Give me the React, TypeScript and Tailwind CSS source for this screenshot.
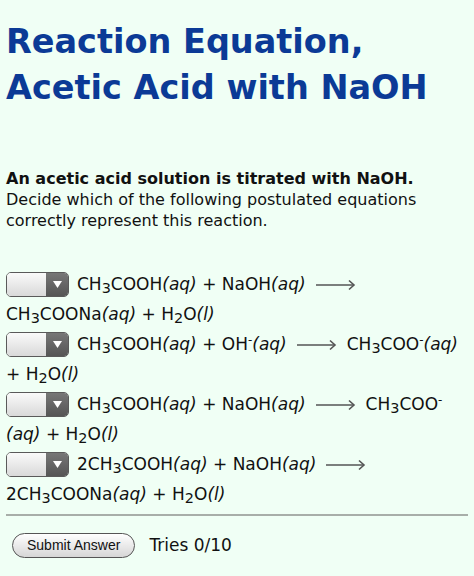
import type { ReactNode } from "react";

function Sub({ children }: { children: ReactNode }) {
  return <span className="relative top-[3px] text-[0.85em] leading-none">{children}</span>;
}

function Sup({ children }: { children: ReactNode }) {
  return <span className="relative -top-[6px] text-[0.7em] leading-none">{children}</span>;
}

function Arrow() {
  return (
    <svg width="44" height="14" viewBox="0 0 44 14" className="mx-[8px] inline-block align-middle">
      <path d="M2 7h38" stroke="#555" strokeWidth="1.6" />
      <path d="M35 2.5 40 7l-5 4.5" stroke="#555" strokeWidth="1.6" fill="none" />
    </svg>
  );
}

function Select() {
  return (
    <span className="mr-[8px] inline-flex h-[25px] w-[63px] shrink-0 overflow-hidden rounded-[5px] border border-[#5a5a5a]">
      <span className="flex-1 bg-gradient-to-b from-[#fafafa] to-[#d9d9d9]" />
      <span className="flex w-[22px] items-center justify-center bg-gradient-to-b from-[#777] to-[#555]">
        <svg width="9" height="7" viewBox="0 0 9 7">
          <path d="M0 0h9L4.5 7z" fill="#fff" />
        </svg>
      </span>
    </span>
  );
}

const ch3 = (
  <>
    CH<Sub>3</Sub>
  </>
);

function Aq() {
  return <i>(aq)</i>;
}

function Water() {
  return (
    <>
      H<Sub>2</Sub>O<i>(l)</i>
    </>
  );
}

function Row({ first, second }: { first: ReactNode; second: ReactNode }) {
  return (
    <div>
      <div className="flex h-[30px] items-center whitespace-nowrap">
        <Select />
        <span>{first}</span>
      </div>
      <div className="flex h-[30px] items-center whitespace-nowrap">
        <span>{second}</span>
      </div>
    </div>
  );
}

export default function App() {
  return (
    <div className="min-h-[576px] bg-[#f0fff5] px-[6px] pt-[19px] font-['DejaVu_Sans',Verdana,sans-serif] text-[#111]">
      <h1 className="text-[33.5px] font-bold leading-[46px] text-[#0b3a96]">
        Reaction Equation,
        <br />
        Acetic Acid with NaOH
      </h1>

      <div className="mt-[57px] text-[16px] leading-[21px]">
        <p className="font-bold">An acetic acid solution is titrated with NaOH.</p>
        <p>
          Decide which of the following postulated equations
          <br />
          correctly represent this reaction.
        </p>
      </div>

      <div className="mt-[38px] text-[17px] leading-[20px]">
        <Row
          first={
            <>
              {ch3}COOH<Aq /> + NaOH<Aq />
              <Arrow />
            </>
          }
          second={
            <>
              {ch3}COONa<Aq /> + <Water />
            </>
          }
        />
        <Row
          first={
            <>
              {ch3}COOH<Aq /> + OH<Sup>-</Sup>
              <Aq />
              <Arrow />
              {ch3}COO<Sup>-</Sup>
              <Aq />
            </>
          }
          second={
            <>
              + <Water />
            </>
          }
        />
        <Row
          first={
            <>
              {ch3}COOH<Aq /> + NaOH<Aq />
              <Arrow />
              {ch3}COO<Sup>-</Sup>
            </>
          }
          second={
            <>
              <Aq /> + <Water />
            </>
          }
        />
        <Row
          first={
            <>
              2{ch3}COOH<Aq /> + NaOH<Aq />
              <Arrow />
            </>
          }
          second={
            <>
              2{ch3}COONa<Aq /> + <Water />
            </>
          }
        />
      </div>

      <hr className="mt-[5px] border-t-[2px] border-[#a8aea9]" />

      <div className="mt-[17px] flex items-center gap-[14px] pl-[6px]">
        <button className="h-[25px] rounded-full border border-[#555] bg-gradient-to-b from-[#ffffff] to-[#d6d6d6] px-[14px] font-['Liberation_Sans',Arial,sans-serif] text-[14px] text-[#111]">
          Submit Answer
        </button>
        <span className="text-[17px]">Tries 0/10</span>
      </div>
    </div>
  );
}
